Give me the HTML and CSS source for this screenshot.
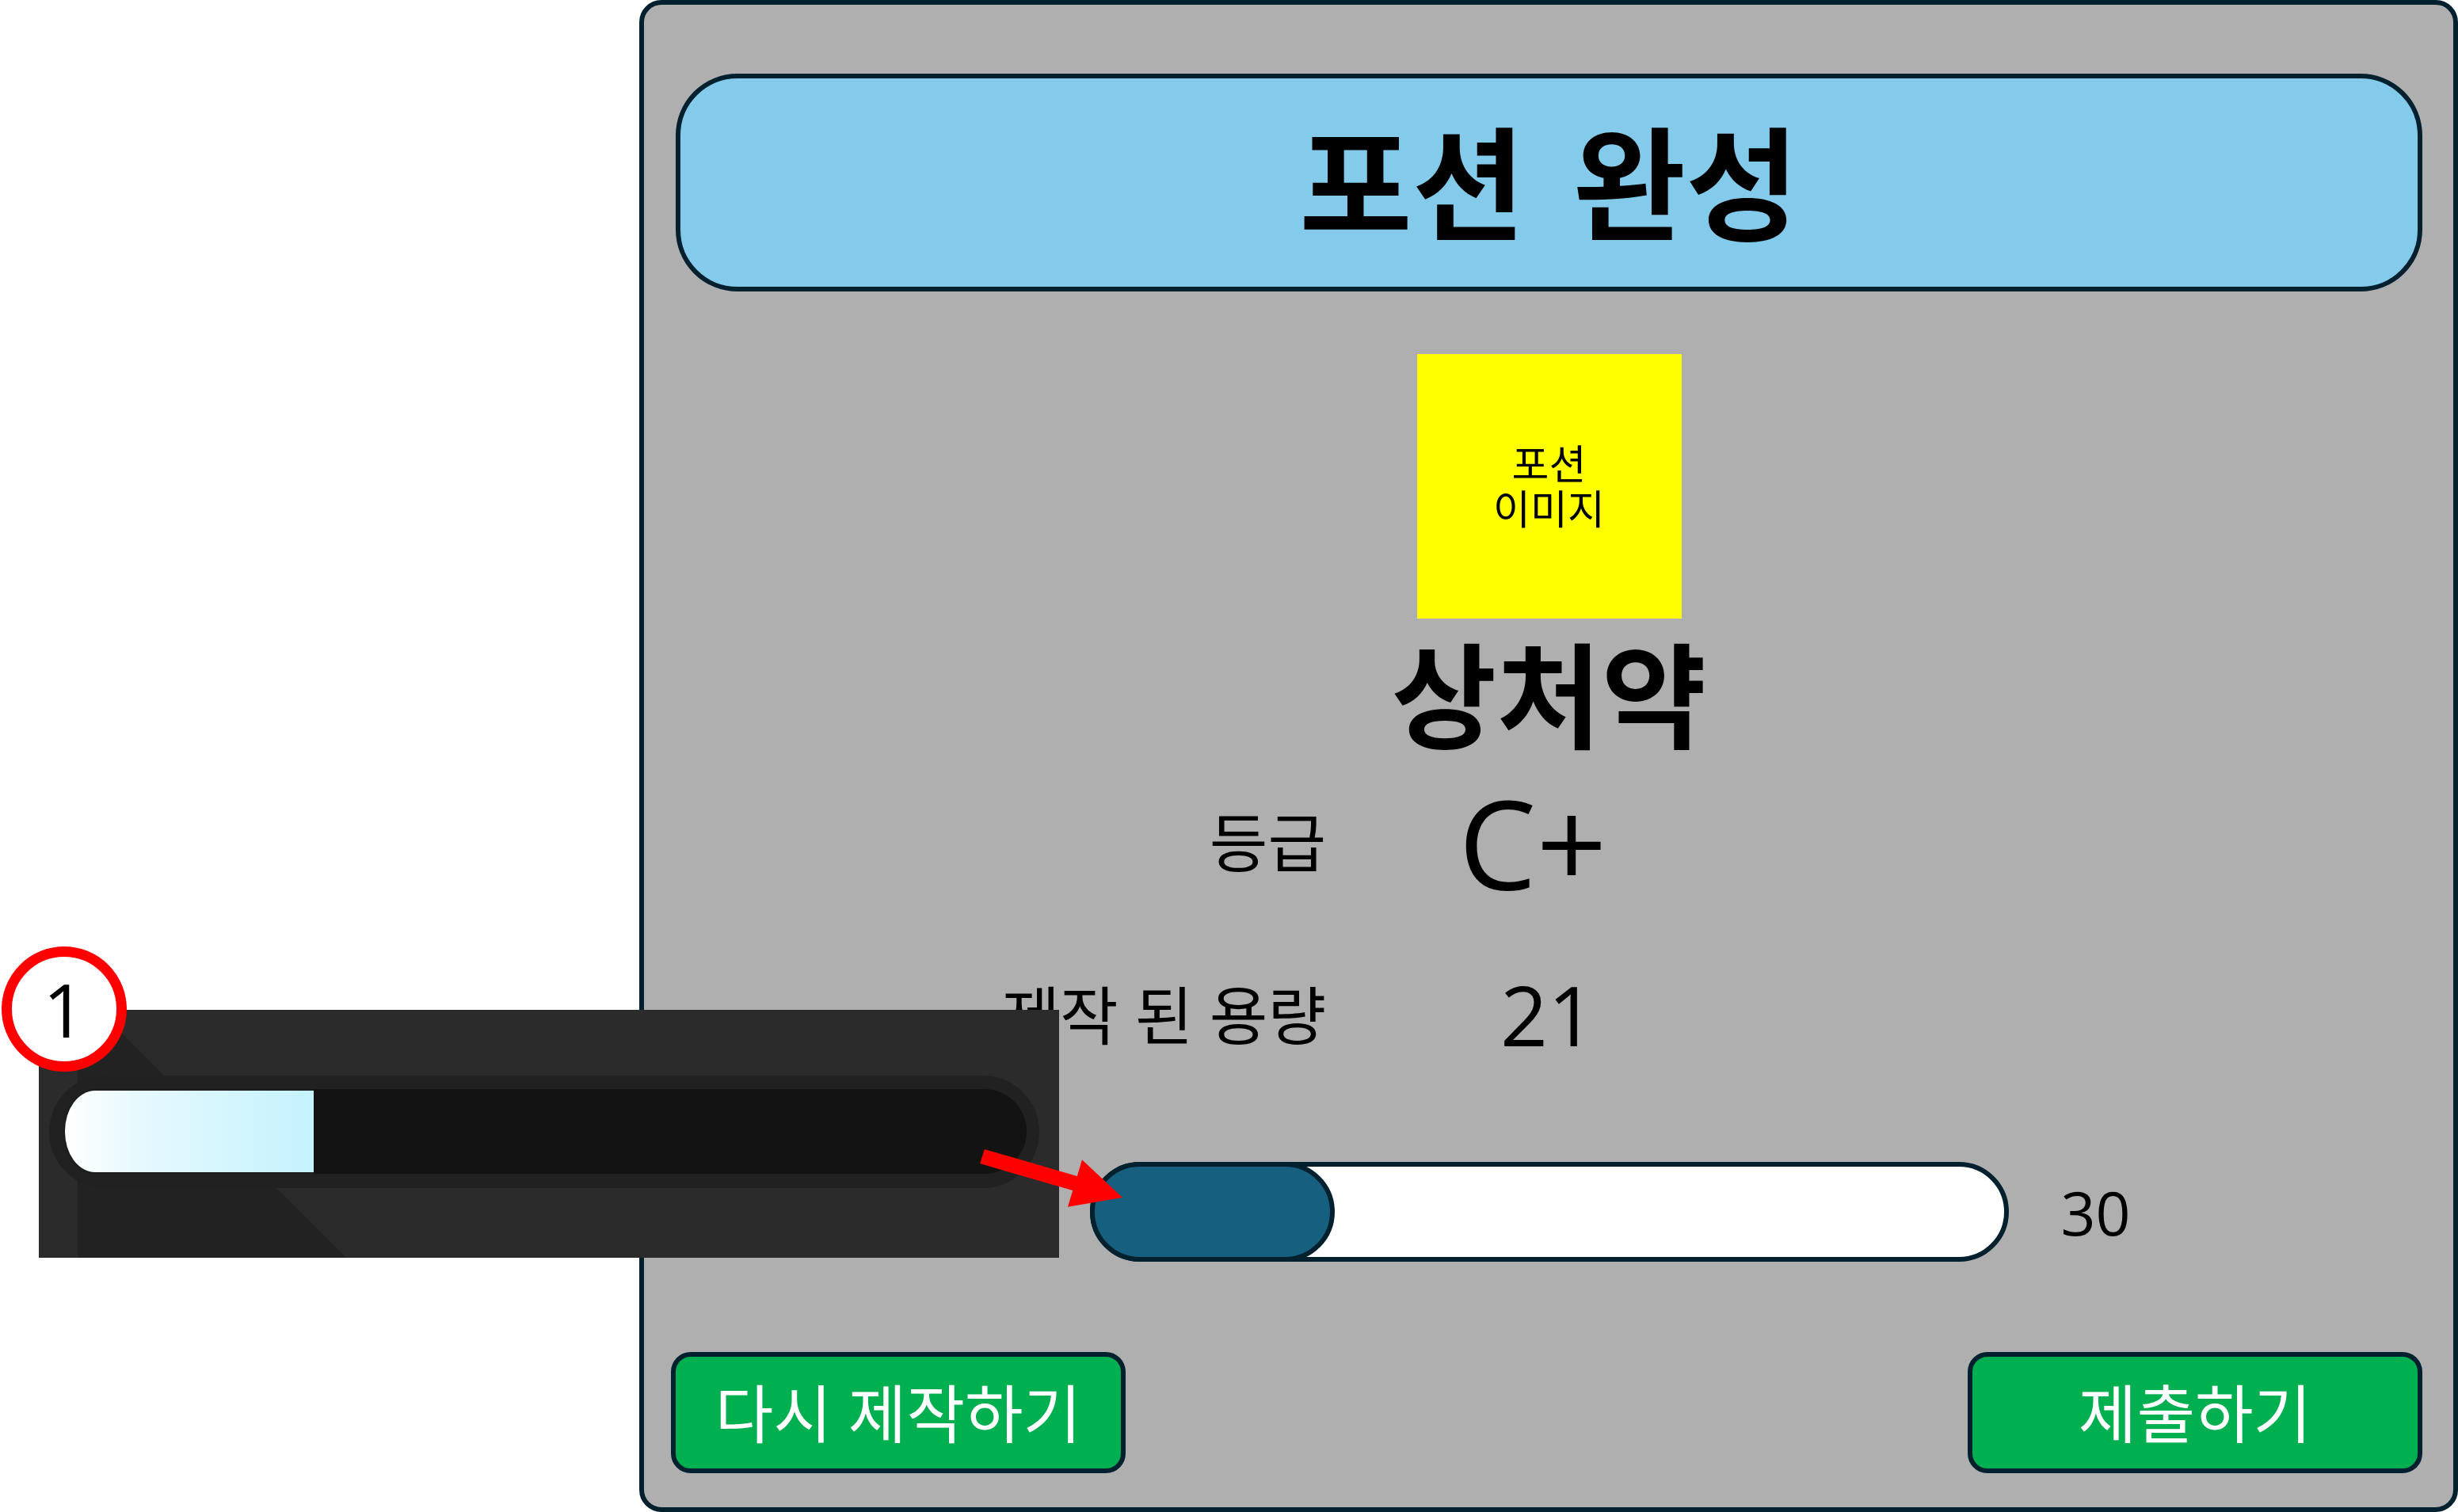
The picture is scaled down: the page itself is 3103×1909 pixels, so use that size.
FILE: index.html
```html
<!DOCTYPE html>
<html lang="ko">
<head>
<meta charset="utf-8">
<title>포션 완성</title>
<link rel="stylesheet" href="styles.css">
</head>
<body>
  <main class="panel">
    <header class="title">포션 완성</header>
    <div class="potion-img">
      <span class="potion-img-line">포션</span>
      <span class="potion-img-line">이미지</span>
    </div>
    <h2 class="potion-name">상처약</h2>
    <dl class="stats">
      <dt class="stat-label">등급</dt>
      <dd class="stat-value grade">C+</dd>
      <dt class="stat-label">제작 된 용량</dt>
      <dd class="stat-value amount">21</dd>
    </dl>
    <div class="gauge-row">
      <div class="gauge">
        <div class="gauge-fill" style="width:309px"></div>
      </div>
      <span class="gauge-max">30</span>
    </div>
    <div class="actions">
      <button class="btn">다시 제작하기</button>
      <button class="btn">제출하기</button>
    </div>
  </main>

  <figure class="ref-shot">
    <svg class="ref-shadow" width="1288" height="313" viewBox="0 0 1288 313">
      <polygon points="49,0 75,0 388,313 49,313" fill="#222222"/>
    </svg>
    <div class="ref-track">
      <div class="ref-track-inner">
        <div class="ref-fill"></div>
      </div>
    </div>
  </figure>

  <div class="badge">1</div>

  <svg class="arrow" width="200" height="95" viewBox="0 0 200 95">
    <polygon points="12.8,10.9 129.8,44.9 136,24.3 187,72 118,83.7 124.2,63.1 7.2,29.1" fill="#ff0000"/>
  </svg>
</body>
</html>
```

FILE: styles.css
```css
html, body {
  margin: 0;
  padding: 0;
}

body {
  position: relative;
  width: 3103px;
  height: 1909px;
  overflow: hidden;
  background: #ffffff;
  font-family: "Open Sans", "Noto Sans CJK KR", sans-serif;
  color: #000000;
}

.panel {
  box-sizing: border-box;
  width: 2296px;
  height: 1909px;
  margin-left: 807px;
  border: 6px solid #03202f;
  border-radius: 28px;
  background: #afafaf;
  padding: 87px 39px 43px 40px;
  display: flex;
  flex-direction: column;
  align-items: center;
}

.title {
  align-self: stretch;
  box-sizing: border-box;
  height: 275px;
  border: 6px solid #03202f;
  border-radius: 78px;
  background: #83caeb;
  display: flex;
  align-items: center;
  justify-content: center;
  font-size: 155px;
  font-weight: 700;
  line-height: 1;
  word-spacing: 20px;
}

.potion-img {
  margin-top: 79px;
  width: 334px;
  height: 334px;
  background: #ffff00;
  display: flex;
  flex-direction: column;
  align-items: center;
  justify-content: center;
  font-size: 51px;
}

.potion-img-line {
  display: block;
  height: 57px;
  line-height: 57px;
}

.potion-name {
  margin: 29px 0 0;
  height: 136px;
  line-height: 136px;
  font-size: 144px;
  font-weight: 700;
}

.stats {
  margin: 57px 0 0;
  align-self: stretch;
  display: grid;
  grid-template-columns: 821px 542px;
  grid-auto-rows: 120px;
  row-gap: 98px;
  align-items: center;
}

.stat-label {
  text-align: right;
  font-size: 80px;
  line-height: 120px;
}

.stat-value {
  margin: 0;
  text-align: center;
  line-height: 120px;
}

.grade {
  font-size: 156px;
  padding-right: 20px;
}

.amount {
  font-size: 105px;
  padding-left: 18px;
}

.gauge-row {
  margin-top: 126px;
  align-self: stretch;
  display: grid;
  grid-template-columns: 1fr 1160px 1fr;
  align-items: center;
}

.gauge {
  grid-column: 2;
  box-sizing: border-box;
  height: 126px;
  border: 6px solid #03202f;
  border-radius: 63px;
  background: #ffffff;
  display: flex;
}

.gauge-fill {
  box-sizing: border-box;
  flex: none;
  margin: -6px;
  height: 126px;
  border: 6px solid #03202f;
  border-radius: 63px;
  background: #175f7f;
}

.gauge-max {
  grid-column: 3;
  padding-left: 66px;
  font-size: 77px;
  line-height: 1;
}

.actions {
  margin-top: 114px;
  margin-left: -6px;
  align-self: stretch;
  display: flex;
  justify-content: space-between;
}

.btn {
  box-sizing: border-box;
  width: 574px;
  height: 153px;
  border: 6px solid #03202f;
  border-radius: 25px;
  background: #00af50;
  color: #ffffff;
  font-family: "Open Sans", "Noto Sans CJK KR", sans-serif;
  font-size: 80px;
  line-height: 1;
  padding: 0;
}

/* reference screenshot overlay */
.ref-shot {
  position: absolute;
  left: 49px;
  top: 1275px;
  width: 1288px;
  height: 313px;
  margin: 0;
  background: #2b2b2b;
  overflow: hidden;
}

.ref-shadow {
  position: absolute;
  left: 0;
  top: 0;
}

.ref-track {
  position: absolute;
  left: 13px;
  top: 83px;
  box-sizing: border-box;
  width: 1250px;
  height: 142px;
  border-radius: 71px;
  background: #212121;
  padding: 17px 16px 17px 23px;
}

.ref-track-inner {
  height: 107px;
  border-radius: 54px;
  background: #131313;
  display: flex;
}

.ref-fill {
  margin-left: -5px;
  width: 316px;
  height: 107px;
  box-sizing: border-box;
  border: 2px solid #1d1d1d;
  border-right: none;
  border-radius: 40px 0 0 40px / 53px 0 0 53px;
  background: linear-gradient(to right, #ffffff 0%, #e6f9fe 30%, #c4f2fd 100%);
}

.badge {
  position: absolute;
  left: 2px;
  top: 1195px;
  box-sizing: border-box;
  width: 158px;
  height: 158px;
  border: 13px solid #ff0000;
  border-radius: 50%;
  background: #ffffff;
  display: flex;
  align-items: center;
  justify-content: center;
  font-size: 94px;
  line-height: 1;
  color: #000000;
}

.arrow {
  position: absolute;
  left: 1230px;
  top: 1440px;
}
```
